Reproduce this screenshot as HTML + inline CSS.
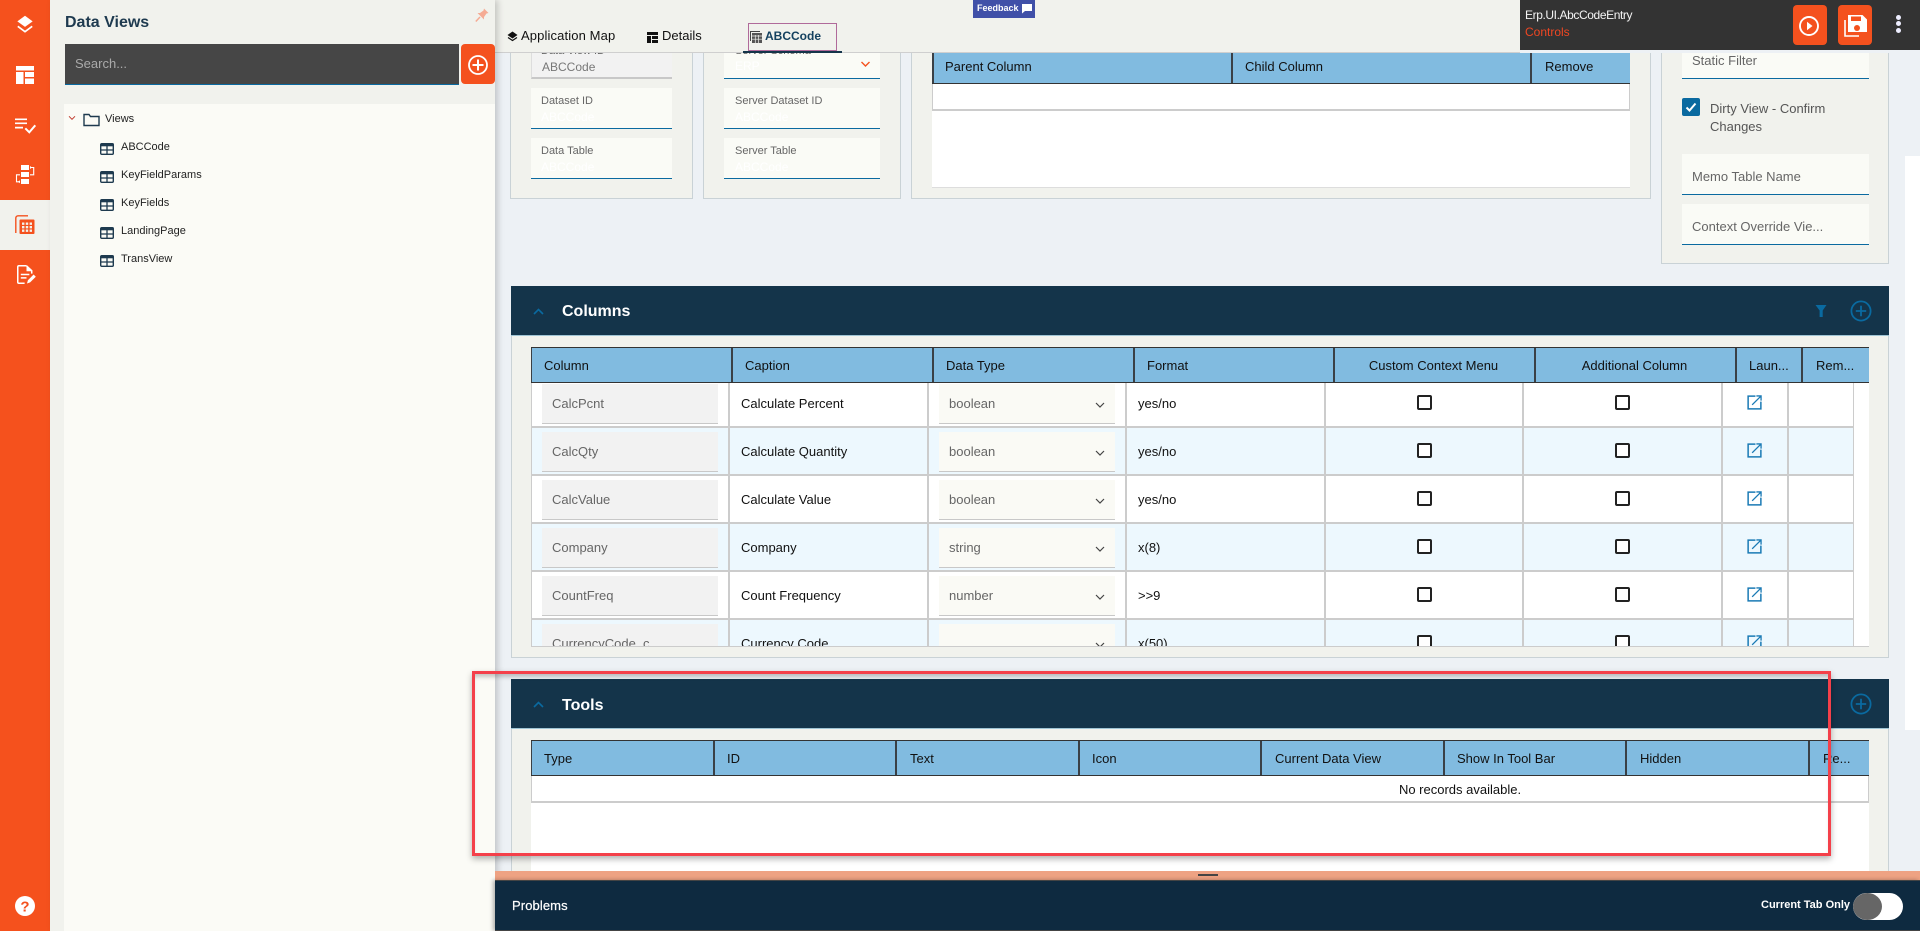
<!DOCTYPE html>
<html><head><meta charset="utf-8"><title>Data Views</title>
<style>
*{box-sizing:border-box}
html,body{margin:0;padding:0;width:1920px;height:931px;overflow:hidden;background:#edf1f5;font-family:"Liberation Sans",sans-serif;font-size:13px;color:#111}
.a,.t{position:absolute}
.t{white-space:nowrap;line-height:16px}
svg{position:absolute;display:block;overflow:visible}
.card{position:absolute;background:#f1f2ed;border:1px solid #c9d2d6;border-top:0}
.fld{position:absolute;background:#fafbf6;border-bottom:1px solid #0a6aa0}
.lab{color:#666}
.sm{font-size:11px}
.hd{position:absolute;background:#81bbe0;border-top:1px solid #333;border-bottom:1px solid #333;overflow:hidden}
.hd i{position:absolute;top:0;bottom:0;width:2px;background:#3a4046}
.hd span{position:absolute;top:0;line-height:36px;white-space:nowrap;color:#111}
.sec{position:absolute;left:511px;width:1378px;background:#14344a;border-bottom:1px solid #9fc4d4}
.sec b{position:absolute;left:51px;color:#fff;font-size:16px;line-height:20px}
.row{position:absolute;left:0;width:1322px;height:48px;border-bottom:2px solid #ccc;background:#fff}
.row.b{background:#edf8fe}
.ci{position:absolute;left:11px;top:4px;width:176px;height:40px;background:#f2f2f2;border-bottom:1px solid #c8c8c8;color:#666;line-height:40px;padding-left:10px}
.cc{position:absolute;left:210px;top:16px;line-height:16px;white-space:nowrap}
.cs{position:absolute;left:408px;top:4px;width:176px;height:40px;background:#fafaf5;border-bottom:1px solid #c8c8c8;color:#666;line-height:40px;padding-left:10px}
.cf{position:absolute;left:607px;top:16px;line-height:16px;white-space:nowrap}
.ck{position:absolute;top:15px;width:15px;height:15px;border:2px solid #222;border-radius:2px;background:#fff}
.vl{position:absolute;top:0;bottom:0;width:2px;background:#ccc}
.tr{font-size:11px;color:#222}
</style></head><body>
<svg width="0" height="0" style="position:absolute">
<symbol id="tb" viewBox="0 0 14 12" preserveAspectRatio="none"><rect x=".7" y=".7" width="12.6" height="10.6" rx="1" fill="none" stroke="#1e3a4f" stroke-width="1.4"/><rect x=".7" y=".7" width="12.6" height="2.6" fill="#1e3a4f"/><path d="M7 1v10M1 7h12" stroke="#1e3a4f" stroke-width="1.3"/></symbol>
<symbol id="lnk" viewBox="0 0 16 16"><path d="M9 1.2H1.2v13.6h13.6V7" fill="none" stroke="#1a7ab5" stroke-width="1.6"/><path d="M5.5 10.500 14.500 1.500M10 1h5v5" fill="none" stroke="#1a7ab5" stroke-width="1.4"/></symbol>
<symbol id="chv" viewBox="0 0 12 8"><path d="M2 2l4 4 4-4" fill="none" stroke="#444" stroke-width="1.2"/></symbol>
<symbol id="plus" viewBox="0 0 22 22"><circle cx="11" cy="11" r="9.6" fill="none" stroke="#0a6aa0" stroke-width="1.8"/><path d="M11 5.8v10.4M5.8 11h10.4" stroke="#0a6aa0" stroke-width="1.8"/></symbol>
</svg>

<!-- cards above -->
<div class="card" style="left:510px;top:30px;width:183px;height:169px"></div>
<div class="a" style="left:531px;top:53px;width:141px;height:26px;background:#f2f2f2;border-bottom:2px solid #c8c8c8;border-left:1px solid #ddd;color:#777;line-height:28px;padding-left:10px;font-size:12px">ABCCode</div>
<div class="t sm" style="left:541px;top:43px;color:#666;z-index:1">Data View ID</div>
<div class="fld" style="left:531px;top:88px;width:141px;height:41px"></div>
<div class="t lab sm" style="left:541px;top:93px">Dataset ID</div><div class="t" style="left:541px;top:109px;color:#fff;font-size:12px">ABCCode</div>
<div class="fld" style="left:531px;top:138px;width:141px;height:41px"></div>
<div class="t lab sm" style="left:541px;top:143px">Data Table</div><div class="t" style="left:541px;top:159px;color:#fff;font-size:12px">ABCCode</div>

<div class="card" style="left:703px;top:30px;width:198px;height:169px"></div>
<div class="fld" style="left:724px;top:53px;width:156px;height:26px"></div>
<div class="t sm" style="left:735px;top:43px;color:#666;z-index:1">Server Schema</div>
<div class="t" style="left:735px;top:58px;color:#fff;font-size:12px">ERP</div>
<svg style="left:860px;top:60px" width="11" height="8" viewBox="0 0 11 8"><path d="M1.500 2l4 4 4-4" fill="none" stroke="#f4511e" stroke-width="1.400"/></svg>
<div class="fld" style="left:724px;top:88px;width:156px;height:41px"></div>
<div class="t lab sm" style="left:735px;top:93px">Server Dataset ID</div><div class="t" style="left:735px;top:109px;color:#fff;font-size:12px">ABCCode</div>
<div class="fld" style="left:724px;top:138px;width:156px;height:41px"></div>
<div class="t lab sm" style="left:735px;top:143px">Server Table</div><div class="t" style="left:735px;top:159px;color:#fff;font-size:12px">ABCCode</div>

<div class="card" style="left:911px;top:30px;width:740px;height:169px"></div>
<div class="a" style="left:932px;top:53px;width:698px;height:135px;background:#fff;border-bottom:1px solid #ddd"></div>
<div class="a" style="left:932px;top:84px;width:698px;height:27px;background:#fff;border:1px solid #ccc;border-bottom-width:2px;border-top:0"></div>
<div class="hd" style="left:932px;top:40px;width:698px;height:44px">
<i style="left:0"></i><i style="left:299px"></i><i style="left:598px"></i>
<span style="left:13px;top:9px;line-height:33px">Parent Column</span><span style="left:313px;top:9px;line-height:33px">Child Column</span><span style="left:613px;top:9px;line-height:33px">Remove</span></div>

<div class="card" style="left:1661px;top:30px;width:228px;height:234px"></div>
<div class="fld" style="left:1682px;top:53px;width:187px;height:26px"></div>
<div class="t lab" style="left:1692px;top:53px">Static Filter</div>
<div class="a" style="left:1682px;top:98px;width:18px;height:18px;background:#0a6aa0;border-radius:2px"></div>
<svg style="left:1682px;top:98px" width="18" height="18" viewBox="0 0 18 18"><path d="M4.500 9.500l3 3 6-7" fill="none" stroke="#fff" stroke-width="2"/></svg>
<div class="t" style="left:1710px;top:101px;color:#555">Dirty View - Confirm</div>
<div class="t" style="left:1710px;top:119px;color:#555">Changes</div>
<div class="fld" style="left:1682px;top:154px;width:187px;height:41px"></div>
<div class="t lab" style="left:1692px;top:169px">Memo Table Name</div>
<div class="fld" style="left:1682px;top:204px;width:187px;height:41px"></div>
<div class="t lab" style="left:1692px;top:219px">Context Override Vie...</div>

<div class="a" style="left:1905px;top:156px;width:15px;height:574px;background:#fff"></div>

<!-- Columns -->
<div class="sec" style="top:286px;height:50px">
<b style="top:16px">Columns</b>
<svg style="left:21px;top:21px" width="13" height="9" viewBox="0 0 13 9"><path d="M2 7l4.500-4.500L11 7" fill="none" stroke="#0a6aa0" stroke-width="1.600"/></svg>
<svg style="left:1304px;top:18px" width="12" height="14" viewBox="0 0 12 14"><path d="M.5 1h11L7.700 6.500V13H4.600V6.500z" fill="#0a6aa0"/></svg>
<svg style="left:1339px;top:14px" width="22" height="22"><use href="#plus"/></svg>
</div>
<div class="a" style="left:511px;top:336px;width:1378px;height:322px;background:#f1f2ed;border:1px solid #c9d2d6;border-top:0"></div>
<div class="hd" style="left:531px;top:347px;width:1338px;height:36px">
<i style="left:0;width:1px"></i><i style="left:200px"></i><i style="left:401px"></i><i style="left:602px"></i><i style="left:802px"></i><i style="left:1003px"></i><i style="left:1204px"></i><i style="left:1270px"></i>
<span style="left:13px">Column</span><span style="left:214px">Caption</span><span style="left:415px">Data Type</span><span style="left:616px">Format</span>
<span style="left:802px;width:201px;text-align:center">Custom Context Menu</span><span style="left:1003px;width:201px;text-align:center">Additional Column</span>
<span style="left:1218px">Laun...</span><span style="left:1285px">Rem...</span></div>

<div class="a" style="left:531px;top:383px;width:1338px;height:264px;overflow:hidden;background:#fff;border-bottom:1px solid #ccc">
<div class="row" style="top:-3px"><div class="ci">CalcPcnt</div><div class="cc">Calculate Percent</div><div class="cs">boolean</div><svg style="left:563px;top:21px" width="12" height="8"><use href="#chv"/></svg><div class="cf">yes/no</div><div class="ck" style="left:886px"></div><div class="ck" style="left:1084px"></div><svg style="left:1216px;top:15px" width="15" height="15"><use href="#lnk"/></svg></div>
<div class="row b" style="top:45px"><div class="ci">CalcQty</div><div class="cc">Calculate Quantity</div><div class="cs">boolean</div><svg style="left:563px;top:21px" width="12" height="8"><use href="#chv"/></svg><div class="cf">yes/no</div><div class="ck" style="left:886px"></div><div class="ck" style="left:1084px"></div><svg style="left:1216px;top:15px" width="15" height="15"><use href="#lnk"/></svg></div>
<div class="row" style="top:93px"><div class="ci">CalcValue</div><div class="cc">Calculate Value</div><div class="cs">boolean</div><svg style="left:563px;top:21px" width="12" height="8"><use href="#chv"/></svg><div class="cf">yes/no</div><div class="ck" style="left:886px"></div><div class="ck" style="left:1084px"></div><svg style="left:1216px;top:15px" width="15" height="15"><use href="#lnk"/></svg></div>
<div class="row b" style="top:141px"><div class="ci">Company</div><div class="cc">Company</div><div class="cs">string</div><svg style="left:563px;top:21px" width="12" height="8"><use href="#chv"/></svg><div class="cf">x(8)</div><div class="ck" style="left:886px"></div><div class="ck" style="left:1084px"></div><svg style="left:1216px;top:15px" width="15" height="15"><use href="#lnk"/></svg></div>
<div class="row" style="top:189px"><div class="ci">CountFreq</div><div class="cc">Count Frequency</div><div class="cs">number</div><svg style="left:563px;top:21px" width="12" height="8"><use href="#chv"/></svg><div class="cf">&gt;&gt;9</div><div class="ck" style="left:886px"></div><div class="ck" style="left:1084px"></div><svg style="left:1216px;top:15px" width="15" height="15"><use href="#lnk"/></svg></div>
<div class="row b" style="top:237px"><div class="ci">CurrencyCode_c</div><div class="cc">Currency Code</div><div class="cs"></div><svg style="left:563px;top:21px" width="12" height="8"><use href="#chv"/></svg><div class="cf">x(50)</div><div class="ck" style="left:886px"></div><div class="ck" style="left:1084px"></div><svg style="left:1216px;top:15px" width="15" height="15"><use href="#lnk"/></svg></div>
<div class="vl" style="left:0;width:1px"></div><div class="vl" style="left:197px"></div><div class="vl" style="left:396px"></div><div class="vl" style="left:594px"></div><div class="vl" style="left:793px"></div><div class="vl" style="left:991px"></div><div class="vl" style="left:1190px"></div><div class="vl" style="left:1256px"></div><div class="vl" style="left:1322px;width:1px"></div>
</div>

<!-- Tools -->
<div class="sec" style="top:679px;height:50px">
<b style="top:17px">Tools</b>
<svg style="left:21px;top:21px" width="13" height="9" viewBox="0 0 13 9"><path d="M2 7l4.500-4.500L11 7" fill="none" stroke="#0a6aa0" stroke-width="1.600"/></svg>
<svg style="left:1339px;top:14px" width="22" height="22"><use href="#plus"/></svg>
</div>
<div class="a" style="left:511px;top:729px;width:1378px;height:150px;background:#f1f2ed;border:1px solid #c9d2d6;border-top:0"></div>
<div class="a" style="left:531px;top:776px;width:1338px;height:100px;background:#fff"></div>
<div class="a" style="left:531px;top:776px;width:1338px;height:27px;background:#fff;border:1px solid #ccc;border-top:0;border-bottom-width:2px;text-align:center;line-height:28px;padding-left:520px">No records available.</div>
<div class="hd" style="left:531px;top:740px;width:1338px;height:36px">
<i style="left:0;width:1px"></i><i style="left:182px"></i><i style="left:364px"></i><i style="left:547px"></i><i style="left:729px"></i><i style="left:912px"></i><i style="left:1094px"></i><i style="left:1277px"></i>
<span style="left:13px">Type</span><span style="left:196px">ID</span><span style="left:379px">Text</span><span style="left:561px">Icon</span><span style="left:744px">Current Data View</span><span style="left:926px">Show In Tool Bar</span><span style="left:1109px">Hidden</span><span style="left:1292px">Re...</span></div>

<!-- top bar -->
<div class="a" style="left:495px;top:0;width:1025px;height:53px;background:#f1f2ed;border-bottom:1px solid #cfcfcf;z-index:2"></div>
<div class="a" style="left:1520px;top:50px;width:400px;height:3px;background:#edf1f5"></div>
<svg style="left:507px;top:31px;z-index:4" width="11" height="11" viewBox="0 0 11 11"><path d="M5.500.5 10.500 4 5.500 7.500.5 4z" fill="#111"/><path d="M1 6.500l4.500 3 4.500-3" fill="none" stroke="#111" stroke-width="1.200"/></svg>
<div class="t" style="left:521px;top:28px;letter-spacing:.12px;z-index:4">Application Map</div>
<svg style="left:647px;top:32px;z-index:4" width="11" height="11" viewBox="0 0 11 11"><path d="M0 0h11v3H0zM0 4h4v7H0zM5 4h6v3H5zM5 8h6v3H5z" fill="#111"/></svg>
<div class="t" style="left:662px;top:28px;z-index:4">Details</div>
<div class="a" style="left:748px;top:23px;width:89px;height:28px;border:1px solid #b06a9a;z-index:4"></div>
<div class="a" style="left:743px;top:51px;width:99px;height:2px;background:#14344a;z-index:4"></div>
<svg style="left:750px;top:31px;z-index:4" width="12" height="12" viewBox="0 0 12 12"><path d="M.5 10V.5H10" fill="none" stroke="#444"/><rect x="2" y="2" width="10" height="10" fill="#555"/><path d="M2 5h10M2 8.200h10M5.300 4v8M8.600 4v8" stroke="#f1f2ed" stroke-width=".7"/></svg>
<div class="t" style="left:765px;top:28px;color:#14415f;font-weight:bold;font-size:12px;z-index:4">ABCCode</div>
<div class="a" style="left:973px;top:0;width:62px;height:18px;background:#4050a8;color:#fff;font-size:9px;font-weight:bold;line-height:17px;padding-left:4px;z-index:4">Feedback</div>
<svg style="left:1021px;top:3px;z-index:4" width="12" height="11" viewBox="0 0 12 11"><path d="M1 1h10v7H4L1 10.500z" fill="#fff"/></svg>

<div class="a" style="left:1520px;top:0;width:400px;height:50px;background:#333"></div>
<div class="t" style="left:1525px;top:7px;color:#f4f4f4;font-size:12px;letter-spacing:-.4px">Erp.UI.AbcCodeEntry</div>
<div class="t" style="left:1525px;top:24px;color:#ef4723;font-size:12px">Controls</div>
<div class="a" style="left:1793px;top:5px;width:34px;height:40px;background:#f4511e;border-radius:4px"></div>
<svg style="left:1798px;top:15px" width="22" height="22" viewBox="0 0 22 22"><circle cx="11" cy="11" r="9" fill="none" stroke="#fff" stroke-width="1.900"/><path d="M9 6.800 14.500 11 9 15.200z" fill="#fff"/></svg>
<div class="a" style="left:1838px;top:5px;width:34px;height:40px;background:#f4511e;border-radius:4px"></div>
<svg style="left:1844px;top:14px" width="24" height="24" viewBox="0 0 24 24"><path d="M1 6v16h14" fill="none" stroke="#fff" stroke-width="1.600"/><path d="M4 1h14.500L23 5.500V18H4z" fill="#fff"/><rect x="7" y="2.500" width="10" height="4.500" fill="#f4511e"/><circle cx="13" cy="14" r="3" fill="#f4511e"/></svg>
<div class="a" style="left:1896px;top:15px;width:5px;height:5px;border-radius:50%;background:#eef"></div>
<div class="a" style="left:1896px;top:21px;width:5px;height:5px;border-radius:50%;background:#eef"></div>
<div class="a" style="left:1896px;top:28px;width:5px;height:5px;border-radius:50%;background:#eef"></div>

<!-- left -->
<div class="a" style="left:0;top:0;width:50px;height:931px;background:#f5511d"></div>
<div class="a" style="left:0;top:200px;width:50px;height:50px;background:#f1f2ed"></div>
<svg style="left:16px;top:15px" width="18" height="19" viewBox="0 0 20 21"><path d="M10 .8 18.500 7 10 13.200 1.500 7z" fill="#fff"/><path d="M2 12.500l8 6 8-6" fill="none" stroke="#fff" stroke-width="1.800"/></svg>
<svg style="left:16px;top:66px" width="18" height="18" viewBox="0 0 18 18"><path d="M0 0h18v4.500H0zM0 6h7.500v12H0zM9 6h9v5H9zM9 12.500h9V18H9z" fill="#fff"/></svg>
<svg style="left:15px;top:118px" width="21" height="15" viewBox="0 0 21 15"><path d="M0 1.300h12M0 5.300h12M0 9.600h8" stroke="#fff" stroke-width="1.700"/><path d="M10.300 10.300l4 4 6-7" fill="none" stroke="#fff" stroke-width="2"/></svg>
<svg style="left:16px;top:165px" width="19" height="19" viewBox="0 0 19 19"><path d="M5 0h8v5H5zM5 7h8v5H5zM5 14h8v5H5z" fill="#fff"/><path d="M14 2.500h3.700v7.300H14M4 9.800H.5v7H4" fill="none" stroke="#fff" stroke-width="1.100"/><path d="M14 1l2 1.500-2 1.500zM4 15.300l-2 1.500 2 1.500z" fill="#fff"/></svg>
<svg style="left:15px;top:215px" width="20" height="20" viewBox="0 0 20 20"><path d="M.8 18V3a2.200 2.200 0 0 1 2.200-2.200h10" fill="none" stroke="#f4511e" stroke-width="1.400"/><rect x="4.500" y="4.500" width="15" height="14.500" rx="1" fill="#f4511e"/><path d="M7 7.500h2.400v2.400H7zM10.800 7.500h2.400v2.400h-2.400zM14.600 7.500H17v2.400h-2.400zM7 11h2.400v2.400H7zM10.800 11h2.400v2.400h-2.400zM14.600 11H17v2.400h-2.400zM7 14.500h2.400v2.400H7zM10.800 14.500h2.400v2.400h-2.400zM14.600 14.500H17v2.400h-2.400z" fill="#f1f2ed"/></svg>
<svg style="left:17px;top:265px" width="19" height="20" viewBox="0 0 20 21"><path d="M10 .8H2a1.200 1.200 0 0 0-1.200 1.200v16a1.200 1.200 0 0 0 1.200 1.200h6M10 .8 15.500 6v3" fill="none" stroke="#fff" stroke-width="1.600"/><path d="M10 1v5.500h5.500z" fill="#fff"/><path d="M4 10h9M4 13.500h6" stroke="#fff" stroke-width="1.600"/><path d="M10.500 19.500l1-3.500 6-6 2.300 2.300-6 6z" fill="#fff"/></svg>
<svg style="left:15px;top:896px" width="20" height="20" viewBox="0 0 20 20"><circle cx="10" cy="10" r="10" fill="#fff"/><text x="10" y="15.500" text-anchor="middle" font-family="Liberation Sans" font-size="15" font-weight="bold" fill="#f4511e">?</text></svg>

<div class="a" style="left:50px;top:0;width:445px;height:931px;background:#f1f2ed;box-shadow:3px 0 6px rgba(0,0,0,.18);z-index:5"></div>
<div class="t" style="left:65px;top:13px;font-size:16px;line-height:20px;font-weight:bold;color:#1e3a4f;z-index:6">Data Views</div>
<svg style="left:475px;top:8px;z-index:6" width="14" height="14" viewBox="0 0 14 14"><path d="M9 .5 13.500 5l-2 .5L9 9v2.500L2.500 5H5l3.500-2.500z" fill="#f5ab94"/><path d="M5 9 .8 13.500" stroke="#f5ab94" stroke-width="1.500"/></svg>
<div class="a" style="left:65px;top:44px;width:394px;height:41px;background:#464646;border-bottom:1px solid #0a6aa0;color:#aaa;line-height:40px;padding-left:10px;font-size:13px;z-index:6">Search...</div>
<div class="a" style="left:461px;top:44px;width:34px;height:40px;background:#f4511e;border-radius:4px;z-index:6"></div>
<svg style="left:468px;top:55px;z-index:6" width="20" height="20" viewBox="0 0 20 20"><circle cx="10" cy="10" r="9" fill="none" stroke="#fff" stroke-width="1.800"/><path d="M10 4.500v11M4.500 10h11" stroke="#fff" stroke-width="2"/></svg>
<div class="a" style="left:64px;top:104px;width:431px;height:827px;background:#fbfbf6;z-index:6"></div>
<svg style="left:68px;top:115px;z-index:7" width="8" height="6" viewBox="0 0 8 6"><path d="M1 1.300l3 3 3-3" fill="none" stroke="#c0392b" stroke-width="1"/></svg>
<svg style="left:83px;top:113px;z-index:7" width="17" height="14" viewBox="0 0 17 14"><path d="M1 12.500V1.500h5l1.500 2h8.500v9z" fill="none" stroke="#1e3a4f" stroke-width="1.400"/></svg>
<div class="t tr" style="left:105px;top:111px;z-index:7">Views</div>
<svg style="left:100px;top:143px;z-index:7" width="14" height="12"><use href="#tb"/></svg><div class="t tr" style="left:121px;top:139px;z-index:7">ABCCode</div>
<svg style="left:100px;top:171px;z-index:7" width="14" height="12"><use href="#tb"/></svg><div class="t tr" style="left:121px;top:167px;z-index:7">KeyFieldParams</div>
<svg style="left:100px;top:199px;z-index:7" width="14" height="12"><use href="#tb"/></svg><div class="t tr" style="left:121px;top:195px;z-index:7">KeyFields</div>
<svg style="left:100px;top:227px;z-index:7" width="14" height="12"><use href="#tb"/></svg><div class="t tr" style="left:121px;top:223px;z-index:7">LandingPage</div>
<svg style="left:100px;top:255px;z-index:7" width="14" height="12"><use href="#tb"/></svg><div class="t tr" style="left:121px;top:251px;z-index:7">TransView</div>

<!-- bottom -->
<div class="a" style="left:495px;top:871px;width:1425px;height:9px;background:#eea283;z-index:8"></div>
<div class="a" style="left:1198px;top:874px;width:20px;height:2px;background:#444;z-index:8"></div>
<div class="a" style="left:495px;top:880px;width:1425px;height:51px;background:#0e2a40;border-top:1px solid #444;border-bottom:1px solid #444;box-shadow:-2px 0 4px rgba(0,0,0,.3);z-index:8"></div>
<div class="t" style="left:512px;top:898px;color:#fff;font-size:13px;-webkit-text-stroke:.2px #fff;letter-spacing:.1px;z-index:9">Problems</div>
<div class="t" style="left:1761px;top:897px;color:#fff;font-size:11px;font-weight:bold;z-index:9">Current Tab Only</div>
<div class="a" style="left:1853px;top:893px;width:50px;height:27px;background:#fff;border-radius:14px;z-index:9"></div>
<div class="a" style="left:1853px;top:893px;width:29px;height:27px;background:#666;border-radius:50%;z-index:9"></div>

<!-- red annotation -->
<div class="a" style="left:472px;top:671px;width:1359px;height:185px;border:3px solid #f4404a;box-shadow:0 3px 6px rgba(0,0,0,.3),inset 0 5px 4px -2px rgba(0,0,0,.22);z-index:10"></div>
</body></html>
